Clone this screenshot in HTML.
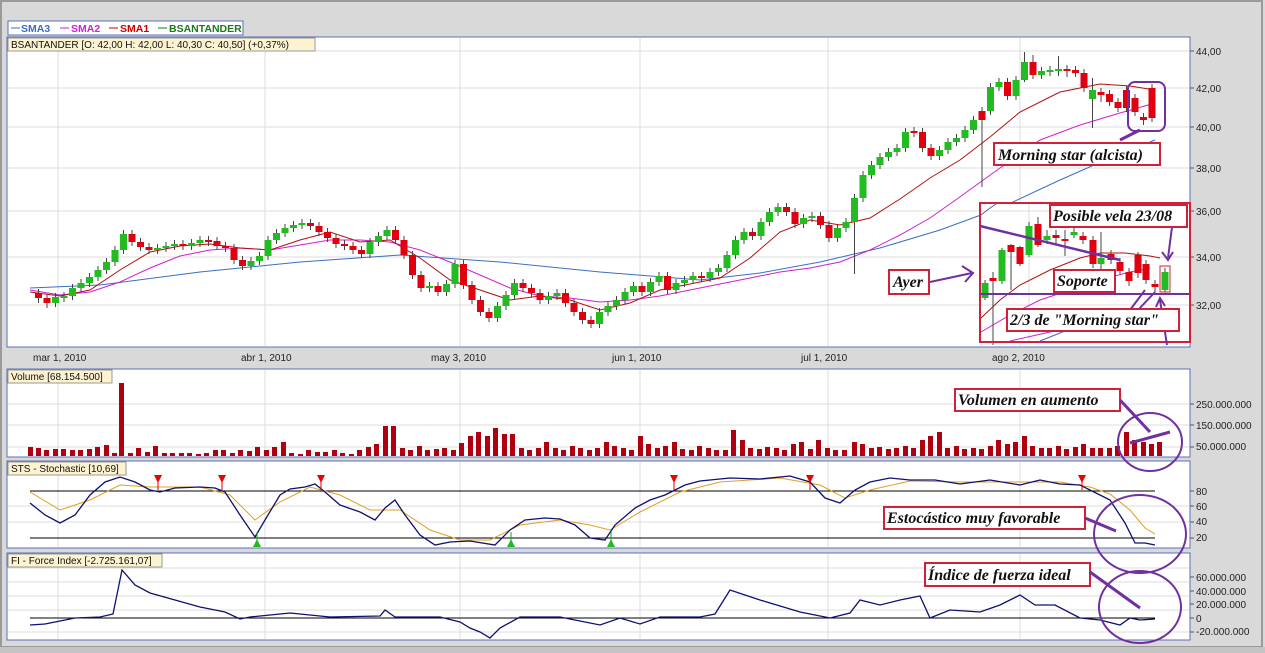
<!DOCTYPE html>
<html><head><meta charset="utf-8"><style>
html,body{margin:0;padding:0;background:#d8d9d8;}
svg{display:block;font-family:"Liberation Sans",sans-serif;}
.ann{font-family:"Liberation Serif",serif;font-weight:bold;font-style:italic;font-size:16px;fill:#111;}
.ax{font-size:10px;fill:#222;}
</style></head><body>
<svg width="1265" height="653" xmlns="http://www.w3.org/2000/svg">
<rect x="0" y="0" width="1265" height="653" fill="#d8d9d8"/>
<rect x="1" y="1" width="1261" height="646" fill="none" stroke="#9a9a9a" stroke-width="2"/>
<rect x="0" y="647" width="1265" height="6" fill="#c4c4c4"/>
<rect x="7" y="37" width="1183" height="310" fill="#fff" stroke="#5a70b8"/>
<rect x="7" y="369" width="1183" height="88" fill="#fff" stroke="#5a70b8"/>
<rect x="7" y="461" width="1183" height="87" fill="#fff" stroke="#5a70b8"/>
<rect x="7" y="553" width="1183" height="87" fill="#fff" stroke="#5a70b8"/>
<g stroke="#dcdcdc" stroke-width="1">
<path d="M58 38V346M265 38V346M460 38V346M640 38V346M828 38V346M1020 38V346M58 370V456M265 370V456M460 370V456M640 370V456M828 370V456M1020 370V456M58 462V547M265 462V547M460 462V547M640 462V547M828 462V547M1020 462V547M58 554V639M265 554V639M460 554V639M640 554V639M828 554V639M1020 554V639"/>
<path d="M8 51H1189M8 88H1189M8 127H1189M8 168H1189M8 211H1189M8 257H1189M8 305H1189M8 404H1189M8 425H1189M8 447H1189M8 506H1189M8 522H1189M8 568H1189M8 582H1189M8 596H1189M8 610H1189M8 632H1189"/>
</g>
<!-- SMAs -->
<polyline fill="none" stroke="#3b6fc4" points="30,288 100,285 200,272 300,262 400,255 500,262 600,272 700,280 760,273 820,262 880,248 940,230 1000,208 1060,180 1110,158 1155,140"/>
<polyline fill="none" stroke="#d020d0" points="30,290 60,295 90,292 120,282 150,268 180,256 210,250 240,248 270,250 300,245 330,240 360,240 390,242 420,250 450,262 480,275 510,288 540,296 570,298 600,302 630,300 660,296 690,290 720,284 750,278 780,272 810,268 840,262 870,250 900,235 930,218 957,199 1000,168 1040,140 1080,125 1120,113 1155,103"/>
<polyline fill="none" stroke="#b01010" points="30,292 60,296 90,290 120,270 150,252 180,246 210,244 240,248 270,250 300,240 330,232 360,242 390,240 420,258 450,280 480,290 510,300 540,296 570,300 600,310 630,303 660,290 690,284 720,278 750,258 780,232 810,220 840,225 870,218 900,199 930,178 960,160 990,137 1020,112 1060,92 1100,84 1130,86 1155,90"/>
<!-- wicks -->
<path stroke="#444" stroke-width="1" fill="none" d="M38.5 289v14M47 294v14M55.5 293v14M64 292v10M72.5 284v16M81 279v13M89.5 273v14M98 266v15M106.5 258v16M115 246v20M123.5 230v24M132 230v16M140.5 238v13M149 243v11M157.5 244v10M166 242v10M174.5 240v10M183 240v10M191.5 239v11M200 236v11M208.5 236v10M217 237v13M225.5 242v10M234 244v20M242.5 256v14M251 257v13M259.5 252v13M268 236v24M276.5 229v15M285 224v13M293.5 221v11M302 219v10M310.5 219v11M319 222v14M327.5 228v14M336 234v14M344.5 240v10M353 242v12M361.5 246v12M370 238v20M378.5 232v14M387 226v14M395.5 226v18M404 236v23M412.5 251v28M421 271v21M429.5 282v10M438 282v14M446.5 280v16M455 260v28M463.5 260v29M472 281v23M480.5 296v20M489 308v14M497.5 302v20M506 291v19M514.5 279v20M523 279v13M531.5 284v13M540 289v15M548.5 292v12M557 289v11M565.5 289v18M574 299v17M582.5 308v16M591 316v12M599.5 308v20M608 302v14M616.5 296v14M625 288v16M633.5 282v14M642 282v14M650.5 278v18M659 272v14M667.5 272v22M676 279v15M684.5 276v11M693 272v12M701.5 272v10M710 268v14M718.5 264v12M727 251v21M735.5 236v23M744 228v16M752.5 228v12M761 218v22M769.5 208v18M778 203v13M786.5 203v13M795 208v20M803.5 214v14M812 212v10M820.5 212v17M829 221v21M837.5 224v18M846 218v14M854.5 194v80M863 171v31M871.5 161v18M880 153v16M888.5 148v13M897 144v12M905.5 128v24M914 127v10M922.5 128v24M931 144v16M939.5 146v14M948 138v16M956.5 134v12M965 126v16M973.5 116v18M982 107v80M990.5 83v32M999 78v13M1007.5 78v22M1016 76v24M1024.5 52v30M1033 55v24M1041.5 67v12M1050 66v10M1058.5 56v20M1067 65v12M1075.5 66v11M1084 69v23M1092.5 78v50M1101 88v14M1109.5 90v16M1118 98v14M1126.5 86v26M1135 94v22M1143.5 113v12M1152 84v38"/>
<path fill="#22bb22" d="M52 297h7v6h-7zM60.5 296h7v2h-7zM69 288h7v8h-7zM77.5 283h7v5h-7zM86 277h7v6h-7zM94.5 270h7v7h-7zM103 262h7v8h-7zM111.5 250h7v12h-7zM120 234h7v16h-7zM154 248h7v2h-7zM162.5 246h7v2h-7zM171 244h7v2h-7zM188 243h7v3h-7zM196.5 240h7v3h-7zM247.5 261h7v5h-7zM256 256h7v5h-7zM264.5 240h7v16h-7zM273 233h7v7h-7zM281.5 228h7v5h-7zM290 225h7v3h-7zM298.5 223h7v2h-7zM366.5 242h7v12h-7zM375 236h7v6h-7zM383.5 230h7v6h-7zM426 286h7v2h-7zM443 284h7v8h-7zM451.5 264h7v20h-7zM494 306h7v12h-7zM502.5 295h7v11h-7zM511 283h7v12h-7zM545 296h7v4h-7zM553.5 293h7v3h-7zM596 312h7v12h-7zM604.5 306h7v6h-7zM613 300h7v6h-7zM621.5 292h7v8h-7zM630 286h7v6h-7zM647 282h7v10h-7zM655.5 276h7v6h-7zM672.5 283h7v7h-7zM681 280h7v3h-7zM689.5 276h7v4h-7zM706.5 272h7v6h-7zM715 268h7v4h-7zM723.5 255h7v13h-7zM732 240h7v15h-7zM740.5 232h7v8h-7zM757.5 222h7v14h-7zM766 212h7v10h-7zM774.5 207h7v5h-7zM800 218h7v6h-7zM808.5 216h7v2h-7zM834 228h7v10h-7zM842.5 222h7v6h-7zM851 198h7v24h-7zM859.5 175h7v23h-7zM868 165h7v10h-7zM876.5 157h7v8h-7zM885 152h7v5h-7zM893.5 148h7v4h-7zM902 132h7v16h-7zM936 150h7v6h-7zM944.5 142h7v8h-7zM953 138h7v4h-7zM961.5 130h7v8h-7zM970 120h7v10h-7zM987 87h7v24h-7zM995.5 82h7v5h-7zM1012.5 80h7v16h-7zM1021 62h7v18h-7zM1038 71h7v4h-7zM1046.5 70h7v2h-7zM1055 69h7v2h-7zM1089 90h7v9h-7z"/>
<path fill="#e00010" d="M35 293h7v5h-7zM43.5 298h7v5h-7zM128.5 234h7v8h-7zM137 242h7v5h-7zM145.5 247h7v3h-7zM179.5 244h7v2h-7zM205 240h7v2h-7zM213.5 241h7v5h-7zM222 246h7v2h-7zM230.5 248h7v12h-7zM239 260h7v6h-7zM307 223h7v3h-7zM315.5 226h7v6h-7zM324 232h7v6h-7zM332.5 238h7v6h-7zM341 244h7v2h-7zM349.5 246h7v4h-7zM358 250h7v4h-7zM392 230h7v10h-7zM400.5 240h7v15h-7zM409 255h7v20h-7zM417.5 275h7v13h-7zM434.5 286h7v6h-7zM460 264h7v21h-7zM468.5 285h7v15h-7zM477 300h7v12h-7zM485.5 312h7v6h-7zM519.5 283h7v5h-7zM528 288h7v5h-7zM536.5 293h7v7h-7zM562 293h7v10h-7zM570.5 303h7v9h-7zM579 312h7v8h-7zM587.5 320h7v4h-7zM638.5 286h7v6h-7zM664 276h7v14h-7zM698 276h7v2h-7zM749 232h7v4h-7zM783 207h7v5h-7zM791.5 212h7v12h-7zM817 216h7v9h-7zM825.5 225h7v13h-7zM910.5 131h7v2h-7zM919 132h7v16h-7zM927.5 148h7v8h-7zM978.5 111h7v9h-7zM1004 82h7v14h-7zM1029.5 62h7v13h-7zM1063.5 69h7v2h-7zM1072 70h7v3h-7zM1080.5 73h7v15h-7zM1097.5 92h7v3h-7zM1106 94h7v8h-7zM1114.5 102h7v6h-7zM1123 90h7v18h-7zM1131.5 98h7v14h-7zM1140 117h7v3h-7zM1148.5 88h7v30h-7z"/>
<!-- inset -->
<rect x="980" y="203" width="210" height="139" fill="#fff"/>
<path stroke="#dcdcdc" d="M981 211H1189M981 257H1189M981 305H1189M1029 204V341"/>
<polyline fill="none" stroke="#5060c0" points="981,215 990,208 996,204"/>
<polyline fill="none" stroke="#5060c0" points="1040,341 1080,325 1120,312"/>
<polyline fill="none" stroke="#d020d0" points="981,332 1010,315 1040,300 1070,290 1100,280 1130,272 1150,268"/>
<polyline fill="none" stroke="#d020d0" points="1010,341 1050,332 1090,320"/>
<polyline fill="none" stroke="#b01010" points="981,318 1000,300 1020,285 1050,270 1080,258 1100,253 1125,253 1150,256 1160,258"/>
<path stroke="#444" fill="none" d="M985 280v20M993 272v73M1002 248v36M1011 244v46M1020 246v20M1029 222v35M1038 217v30M1047 230v14M1056 230v14M1065 230v26M1074 228v10M1083 232v12M1093 236v32M1101 232v40M1111 250v14M1120 258v16M1129 268v18M1138 252v26M1146 260v24M1155 280v12M1165 268v24"/>
<path fill="#22bb22" d="M981.5 283h7v15h-7zM998.5 250h7v31h-7zM1025.5 226h7v29h-7zM1043.5 236h7v4h-7zM1070.5 232h7v3h-7zM1097.5 258h7v6h-7zM1161.5 272h7v18h-7z"/>
<path fill="#e00010" d="M989.5 278h7v3h-7zM1007.5 245h7v7h-7zM1016.5 247h7v17h-7zM1034.5 224h7v21h-7zM1052.5 235h7v3h-7zM1061.5 239h7v2h-7zM1079.5 236h7v4h-7zM1089.5 240h7v24h-7zM1107.5 254h7v6h-7zM1116.5 262h7v9h-7zM1125.5 272h7v9h-7zM1134.5 255h7v18h-7zM1142.5 264h7v16h-7zM1151.5 284h7v3h-7z"/>
<rect x="1160" y="266" width="10" height="26" fill="none" stroke="#d0203a"/>
<!-- volume -->
<path fill="#b00010" d="M28 456v-9h5v9zM36 456v-8h5v8zM44 456v-6h5v6zM53 456v-7h5v7zM61 456v-7h5v7zM70 456v-6h5v6zM78 456v-6h5v6zM87 456v-7h5v7zM95 456v-9h5v9zM104 456v-11h5v11zM119 456v-73h5v73zM112 456v-3h5v3zM128 456v-3h5v3zM136 456v-8h5v8zM145 456v-4h5v4zM153 456v-10h5v10zM162 456v-3h5v3zM170 456v-3h5v3zM179 456v-3h5v3zM187 456v-3h5v3zM196 456v-2h5v2zM204 456v-3h5v3zM213 456v-6h5v6zM221 456v-6h5v6zM230 456v-3h5v3zM238 456v-6h5v6zM247 456v-5h5v5zM255 456v-9h5v9zM264 456v-6h5v6zM272 456v-9h5v9zM281 456v-14h5v14zM289 456v-3h5v3zM298 456v-2h5v2zM306 456v-6h5v6zM315 456v-4h5v4zM323 456v-4h5v4zM332 456v-6h5v6zM340 456v-3h5v3zM349 456v-2h5v2zM357 456v-6h5v6zM366 456v-9h5v9zM374 456v-12h5v12zM383 456v-30h5v30zM391 456v-30h5v30zM400 456v-8h5v8zM408 456v-6h5v6zM417 456v-10h5v10zM425 456v-6h5v6zM434 456v-7h5v7zM442 456v-8h5v8zM451 456v-6h5v6zM459 456v-13h5v13zM468 456v-20h5v20zM476 456v-24h5v24zM485 456v-20h5v20zM493 456v-28h5v28zM502 456v-22h5v22zM510 456v-22h5v22zM519 456v-8h5v8zM527 456v-6h5v6zM536 456v-8h5v8zM544 456v-14h5v14zM553 456v-8h5v8zM561 456v-6h5v6zM570 456v-10h5v10zM578 456v-8h5v8zM587 456v-6h5v6zM595 456v-8h5v8zM604 456v-14h5v14zM612 456v-10h5v10zM621 456v-8h5v8zM629 456v-6h5v6zM638 456v-20h5v20zM646 456v-12h5v12zM655 456v-8h5v8zM663 456v-10h5v10zM672 456v-14h5v14zM680 456v-7h5v7zM689 456v-6h5v6zM697 456v-10h5v10zM706 456v-8h5v8zM714 456v-6h5v6zM723 456v-6h5v6zM731 456v-26h5v26zM740 456v-16h5v16zM748 456v-8h5v8zM757 456v-7h5v7zM765 456v-9h5v9zM774 456v-8h5v8zM782 456v-6h5v6zM791 456v-12h5v12zM799 456v-14h5v14zM808 456v-7h5v7zM816 456v-16h5v16zM825 456v-8h5v8zM833 456v-6h5v6zM842 456v-6h5v6zM852 456v-14h5v14zM860 456v-12h5v12zM869 456v-8h5v8zM877 456v-9h5v9zM886 456v-7h5v7zM894 456v-8h5v8zM903 456v-10h5v10zM911 456v-8h5v8zM920 456v-16h5v16zM928 456v-20h5v20zM937 456v-24h5v24zM945 456v-8h5v8zM954 456v-10h5v10zM962 456v-7h5v7zM971 456v-8h5v8zM979 456v-7h5v7zM988 456v-10h5v10zM996 456v-16h5v16zM1005 456v-12h5v12zM1013 456v-14h5v14zM1022 456v-20h5v20zM1030 456v-10h5v10zM1039 456v-8h5v8zM1047 456v-8h5v8zM1056 456v-10h5v10zM1064 456v-7h5v7zM1073 456v-9h5v9zM1081 456v-12h5v12zM1090 456v-8h5v8zM1098 456v-8h5v8zM1107 456v-8h5v8zM1115 456v-10h5v10zM1124 456v-24h5v24zM1132 456v-16h5v16zM1141 456v-14h5v14zM1149 456v-12h5v12zM1157 456v-14h5v14z"/>
<path d="M30 491H1155M30 538H1155M30 618H1155" stroke="#000"/>
<polyline fill="none" stroke="#e0a020" points="30,492 60,510 90,500 120,485 150,487 200,487 230,495 255,520 280,502 310,487 340,495 370,510 400,510 430,530 460,540 490,540 520,525 560,520 590,525 610,530 640,512 680,492 720,482 780,478 820,485 845,498 870,490 910,481 960,482 1020,482 1060,482 1090,487 1110,494 1130,510 1145,528 1155,534"/>
<polyline fill="none" stroke="#101070" stroke-width="1.3" points="30,503 45,515 60,523 75,515 90,495 105,482 120,477 135,482 150,490 160,492 175,488 200,487 215,488 225,492 240,515 255,537 265,520 280,495 290,489 305,487 315,484 325,492 340,505 360,512 375,520 385,508 395,500 405,515 420,535 435,545 450,542 470,541 495,545 510,530 525,520 545,518 560,519 575,525 590,538 605,540 615,525 635,508 650,500 665,495 685,485 700,481 730,478 760,479 790,476 810,482 825,498 840,503 855,490 870,482 890,478 910,480 935,480 960,484 990,480 1020,485 1040,480 1060,484 1080,485 1100,495 1110,500 1125,523 1135,543 1145,543 1155,545"/>
<path stroke="#d00" d="M158 479v11M222 479v11M321 479v11M674 479v11M810 479v11M1082 479v11"/>
<path fill="#e00" d="M154 475h8l-4 8zM218 475h8l-4 8zM317 475h8l-4 8zM670 475h8l-4 8zM806 475h8l-4 8zM1078 475h8l-4 8z"/>
<path stroke="#1a1" d="M257 532v13M511 532v13M611 532v13"/>
<path fill="#2b2" d="M253 547h8l-4-8zM507 547h8l-4-8zM607 547h8l-4-8z"/>
<polyline fill="none" stroke="#101070" stroke-width="1.3" points="30,625 45,624 55,622 65,620 75,618 100,617 113,614 122,570 135,585 150,593 175,600 200,607 225,612 240,619 250,617 290,613 330,617 380,616 385,610 395,617 440,617 460,622 470,628 480,632 490,638 500,628 520,617 560,617 600,625 620,618 640,624 660,617 700,617 715,614 730,590 760,600 800,612 830,618 850,613 860,600 880,605 900,600 920,596 930,618 950,610 980,612 1000,605 1020,595 1035,605 1055,605 1080,618 1100,620 1120,625 1130,618 1140,620 1155,619"/>
<rect x="8" y="21" width="235" height="14" fill="#fff" stroke="#5a70b8"/>
<g font-size="10.5" font-weight="bold">
<line x1="11" y1="28" x2="20" y2="28" stroke="#3b6fc4"/><text x="21" y="32" fill="#3b6fc4">SMA3</text>
<line x1="60" y1="28" x2="69" y2="28" stroke="#d020d0"/><text x="71" y="32" fill="#d020d0">SMA2</text>
<line x1="109" y1="28" x2="118" y2="28" stroke="#c00"/><text x="120" y="32" fill="#c00">SMA1</text>
<line x1="158" y1="28" x2="167" y2="28" stroke="#1a7a1a"/><text x="169" y="32" fill="#1a7a1a">BSANTANDER</text>
</g>
<rect x="8" y="38" width="307" height="13" fill="#fdf3d0" stroke="#9a9a9a"/>
<text x="11" y="48" font-size="10" fill="#111">BSANTANDER [O: 42,00  H: 42,00  L: 40,30  C: 40,50] (+0,37%)</text>
<rect x="8" y="370" width="104" height="13" fill="#fdf3d0" stroke="#9a9a9a"/>
<text x="11" y="380" font-size="10" fill="#111">Volume [68.154.500]</text>
<rect x="8" y="462" width="118" height="13" fill="#fdf3d0" stroke="#9a9a9a"/>
<text x="11" y="472" font-size="10" fill="#111">STS - Stochastic [10,69]</text>
<rect x="8" y="554" width="154" height="13" fill="#fdf3d0" stroke="#9a9a9a"/>
<text x="11" y="564" font-size="10" fill="#111">FI - Force Index [-2.725.161,07]</text>
<g class="ax">
<text x="33" y="361">mar 1, 2010</text><text x="241" y="361">abr 1, 2010</text><text x="431" y="361">may 3, 2010</text>
<text x="612" y="361">jun 1, 2010</text><text x="801" y="361">jul 1, 2010</text><text x="992" y="361">ago 2, 2010</text>
<text x="1196" y="55">44,00</text><text x="1196" y="92">42,00</text><text x="1196" y="131">40,00</text><text x="1196" y="172">38,00</text>
<text x="1196" y="215">36,00</text><text x="1196" y="261">34,00</text><text x="1196" y="309">32,00</text>
<text x="1196" y="408">250.000.000</text><text x="1196" y="429">150.000.000</text><text x="1196" y="450">50.000.000</text>
<text x="1196" y="495">80</text><text x="1196" y="510">60</text><text x="1196" y="525">40</text><text x="1196" y="541">20</text>
<text x="1196" y="581">60.000.000</text><text x="1196" y="595">40.000.000</text><text x="1196" y="608">20.000.000</text>
<text x="1196" y="622">0</text><text x="1196" y="635">-20.000.000</text>
</g>
<path stroke="#555" d="M1190 51h4M1190 88h4M1190 127h4M1190 168h4M1190 211h4M1190 257h4M1190 305h4M1190 404h4M1190 425h4M1190 447h4M1190 491h4M1190 506h4M1190 522h4M1190 538h4M1190 577h4M1190 591h4M1190 604h4M1190 618h4M1190 632h4"/>
<!-- annotations -->
<rect x="980" y="203" width="210" height="139" fill="none" stroke="#d0203a" stroke-width="2"/>
<rect x="1128" y="82" width="37" height="49" rx="7" fill="none" stroke="#7030a0" stroke-width="2"/>
<line x1="980" y1="226" x2="1120" y2="260" stroke="#7030a0" stroke-width="2.5"/>
<line x1="980" y1="294" x2="1190" y2="294" stroke="#7030a0" stroke-width="2"/>
<path d="M1120 140 L1140 130" stroke="#7030a0" stroke-width="3" fill="none"/>
<path d="M930 282 L972 273 M962 266 L973 273 L965 282" stroke="#7030a0" stroke-width="2" fill="none"/>
<path d="M1172 227 L1168 258 M1162 252 L1168 260 L1173 252" stroke="#7030a0" stroke-width="2" fill="none"/>
<path d="M1130 310 L1145 290 M1138 310 L1155 292 M1167 345 L1160 300 M1156 307 L1160 298 L1165 306" stroke="#7030a0" stroke-width="2" fill="none"/>
<rect x="994" y="143" width="166" height="22" fill="#fff" stroke="#d0203a" stroke-width="2"/>
<text class="ann" x="998" y="160">Morning star (alcista)</text>
<rect x="1050" y="205" width="137" height="22" fill="#fff" stroke="#d0203a" stroke-width="2"/>
<text class="ann" x="1053" y="221">Posible vela 23/08</text>
<rect x="889" y="270" width="40" height="24" fill="#fff" stroke="#d0203a" stroke-width="2"/>
<text class="ann" x="893" y="287">Ayer</text>
<rect x="1054" y="270" width="61" height="22" fill="#fff" stroke="#d0203a" stroke-width="2"/>
<text class="ann" x="1057" y="286">Soporte</text>
<rect x="1007" y="309" width="172" height="22" fill="#fff" stroke="#d0203a" stroke-width="2"/>
<text class="ann" x="1010" y="325">2/3 de "Morning star"</text>
<rect x="955" y="389" width="165" height="22" fill="#fff" stroke="#d0203a" stroke-width="2"/>
<text class="ann" x="958" y="405">Volumen en aumento</text>
<rect x="884" y="507" width="201" height="22" fill="#fff" stroke="#d0203a" stroke-width="2"/>
<text class="ann" x="887" y="523">Estocástico muy favorable</text>
<rect x="925" y="563" width="165" height="23" fill="#fff" stroke="#d0203a" stroke-width="2"/>
<text class="ann" x="928" y="580">Índice de fuerza ideal</text>
<ellipse cx="1150" cy="442" rx="32" ry="29" fill="none" stroke="#7030a0" stroke-width="2"/>
<ellipse cx="1140" cy="534" rx="46" ry="39" fill="none" stroke="#7030a0" stroke-width="2"/>
<ellipse cx="1140" cy="607" rx="41" ry="36" fill="none" stroke="#7030a0" stroke-width="2"/>
<path d="M1120 400 L1150 432 M1130 443 L1170 432 M1085 518 L1116 531 M1090 572 L1140 608" stroke="#7030a0" stroke-width="3" fill="none"/>
</svg>
</body></html>
